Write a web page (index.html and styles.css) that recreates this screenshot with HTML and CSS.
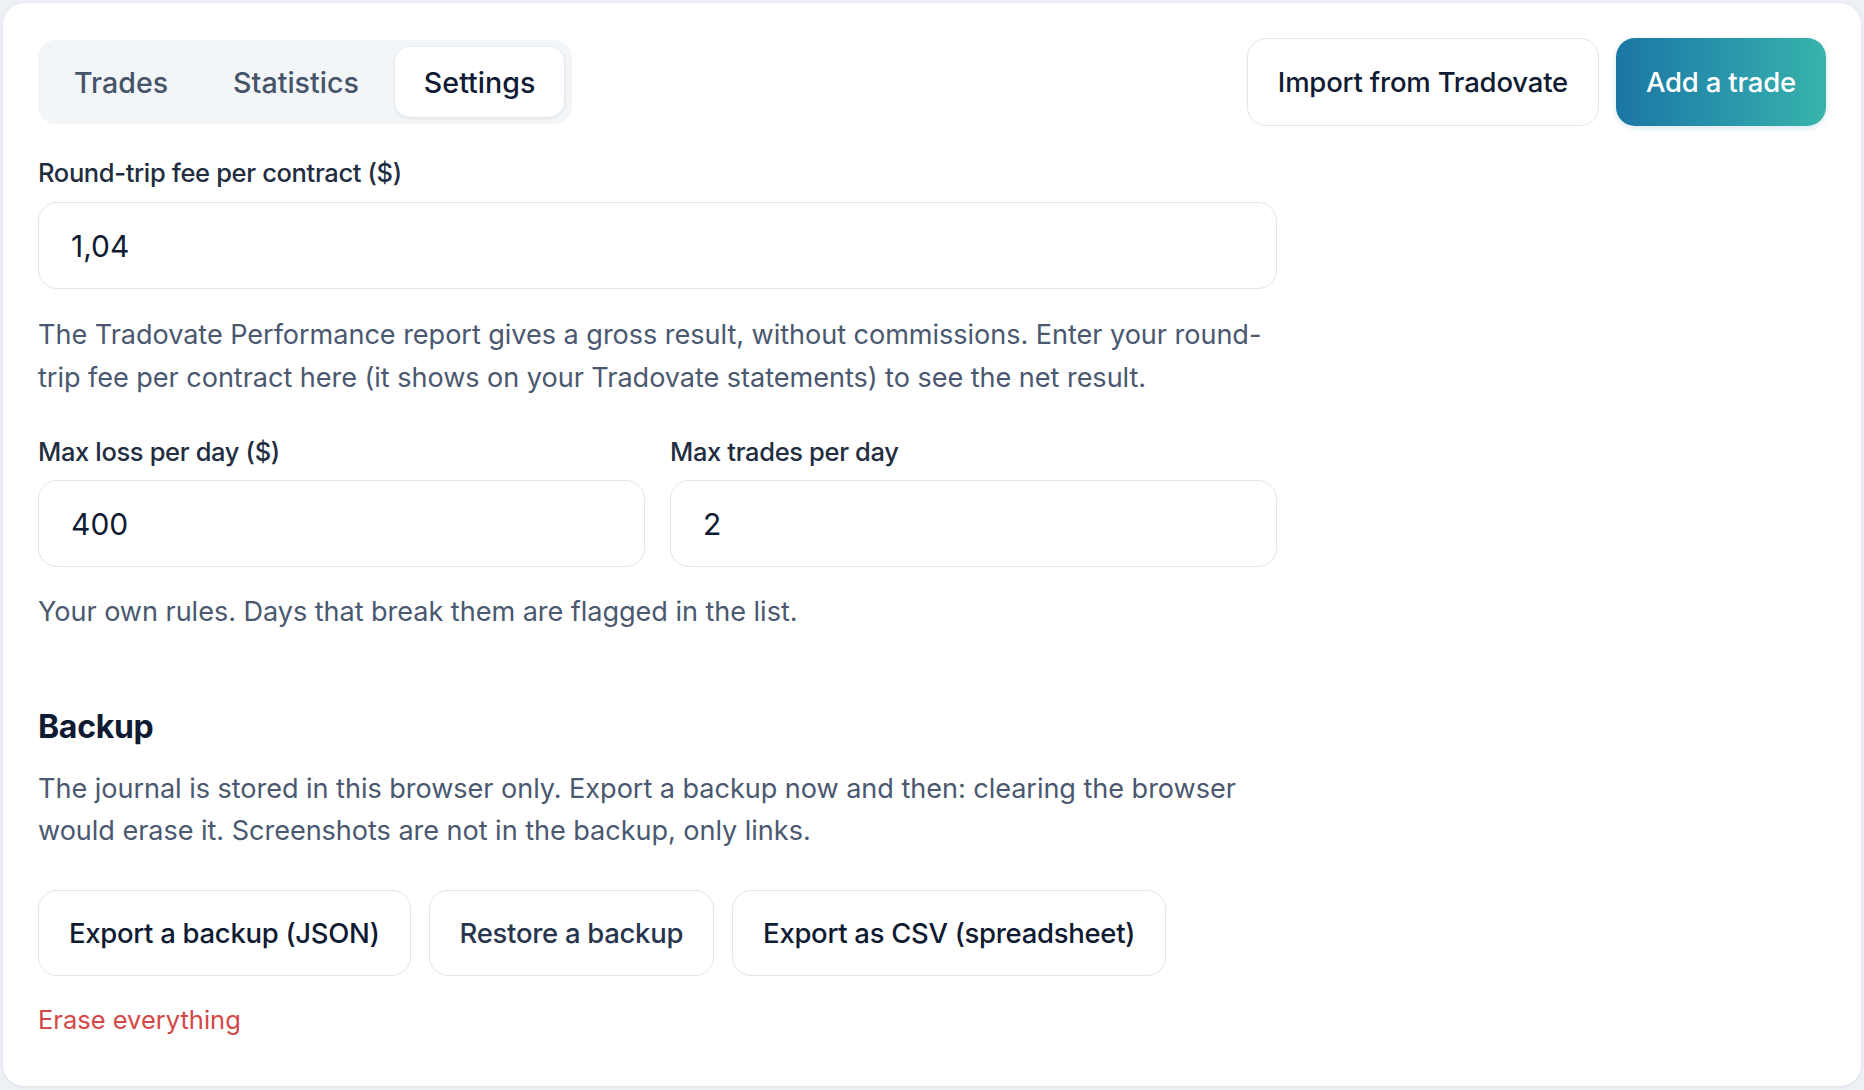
FILE: index.html
```html
<!DOCTYPE html>
<html lang="en">
<head>
<meta charset="utf-8">
<title>Journal – Settings</title>
<link rel="stylesheet" href="styles.css">
</head>
<body>
<main class="card">
  <header class="topbar">
    <nav class="tabs">
      <button class="tab">Trades</button>
      <button class="tab">Statistics</button>
      <button class="tab tab-active">Settings</button>
    </nav>
    <div class="actions">
      <button class="btn btn-outline">Import from Tradovate</button>
      <button class="btn btn-primary">Add a trade</button>
    </div>
  </header>

  <section class="settings">
    <label class="field">
      <span class="field-label">Round-trip fee per contract ($)</span>
      <input class="input" type="text" value="1,04">
    </label>
    <p class="hint hint-fee">The Tradovate Performance report gives a gross result, without commissions. Enter your round-trip fee per contract here (it shows on your Tradovate statements) to see the net result.</p>

    <div class="field-row">
      <label class="field">
        <span class="field-label">Max loss per day ($)</span>
        <input class="input" type="text" value="400">
      </label>
      <label class="field">
        <span class="field-label">Max trades per day</span>
        <input class="input" type="text" value="2">
      </label>
    </div>
    <p class="hint hint-rules">Your own rules. Days that break them are flagged in the list.</p>

    <h2 class="section-title">Backup</h2>
    <p class="hint hint-backup">The journal is stored in this browser only. Export a backup now and then: clearing the browser would erase it. Screenshots are not in the backup, only links.</p>

    <div class="backup-actions">
      <button class="btn btn-outline">Export a backup (JSON)</button>
      <button class="btn btn-outline btn-soft">Restore a backup</button>
      <button class="btn btn-outline">Export as CSV (spreadsheet)</button>
    </div>

    <button class="link-danger">Erase everything</button>
  </section>
</main>
</body>
</html>
```

FILE: styles.css
```css
* {
  box-sizing: border-box;
}

html, body {
  height: 100%;
}

body {
  margin: 0;
  padding: 2px;
  background: #edf0f4;
  font-family: "Inter", "Noto Sans", sans-serif;
  color: #0f1b33;
}

button, input {
  font-family: inherit;
}

.card {
  height: 1085px;
  background: #ffffff;
  border: 1px solid #e3e8ef;
  border-radius: 22px;
  padding: 35px 35px 0 35px;
  box-shadow: 0 1px 3px rgba(15, 23, 42, 0.04);
}

/* top bar: tab switcher on the left, actions on the right */
.topbar {
  display: flex;
  justify-content: space-between;
  align-items: center;
  height: 88px;
}

.tabs {
  display: flex;
  gap: 7px;
  padding: 7px 8px 7px 7px;
  background: #f3f6f8;
  border-radius: 18px;
}

.tab {
  height: 70px;
  padding: 0 29px;
  border: none;
  background: transparent;
  border-radius: 15px;
  font-size: 28.6px;
  font-weight: 500;
  color: #46546a;
  letter-spacing: 0;
  cursor: pointer;
}

.tab-active {
  background: #ffffff;
  color: #0f1b33;
  box-shadow: 0 1px 4px rgba(15, 23, 42, 0.08), 0 0 0 1px rgba(15, 23, 42, 0.02);
}

.actions {
  display: flex;
  gap: 17px;
}

.btn {
  height: 88px;
  padding: 0 30px;
  border-radius: 19px;
  font-size: 27.5px;
  font-weight: 500;
  letter-spacing: -0.2px;
  cursor: pointer;
}

.btn-outline {
  background: #ffffff;
  border: 1.5px solid #e1e6ee;
  color: #0f1b33;
}

.btn-soft {
  color: #28354e;
}

.btn-primary {
  border: none;
  color: #ffffff;
  background: linear-gradient(90deg, #1b76a4 0%, #2a97ab 55%, #38b3ab 100%);
  box-shadow: 0 2px 6px rgba(27, 118, 164, 0.18);
}

/* settings form */
.settings {
  max-width: 1239px;
  padding-top: 29px;
}

.field {
  display: flex;
  flex-direction: column;
  gap: 11px;
}

.field-label {
  font-size: 25.5px;
  line-height: 36px;
  font-weight: 500;
  color: #222d40;
  letter-spacing: -0.35px;
}

.input {
  height: 87px;
  width: 100%;
  padding: 0 32px;
  border: 1.5px solid #e1e6ee;
  border-radius: 19px;
  background: #ffffff;
  font-size: 30px;
  color: #0f1b33;
  outline: none;
}

.hint {
  margin: 0;
  font-size: 27.1px;
  line-height: 42.5px;
  color: #4a5870;
  letter-spacing: -0.05px;
}

.hint-fee {
  margin-top: 25px;
}

.field-row {
  display: grid;
  grid-template-columns: 1fr 1fr;
  gap: 25px;
  margin-top: 35px;
}

.field-row .field {
  gap: 10px;
}

.hint-rules {
  margin-top: 24px;
}

.section-title {
  margin: 73px 0 0 0;
  font-size: 32px;
  line-height: 40px;
  font-weight: 700;
  color: #0f1b33;
  letter-spacing: -0.3px;
}

.hint-backup {
  margin-top: 21px;
}

.backup-actions {
  display: flex;
  gap: 18px;
  margin-top: 37px;
}

.backup-actions .btn {
  height: 86px;
  font-size: 27.5px;
  letter-spacing: -0.3px;
}

.link-danger {
  display: block;
  margin-top: 26px;
  padding: 0;
  border: none;
  background: none;
  font-size: 25.5px;
  line-height: 36px;
  color: #d44848;
  cursor: pointer;
}
```
